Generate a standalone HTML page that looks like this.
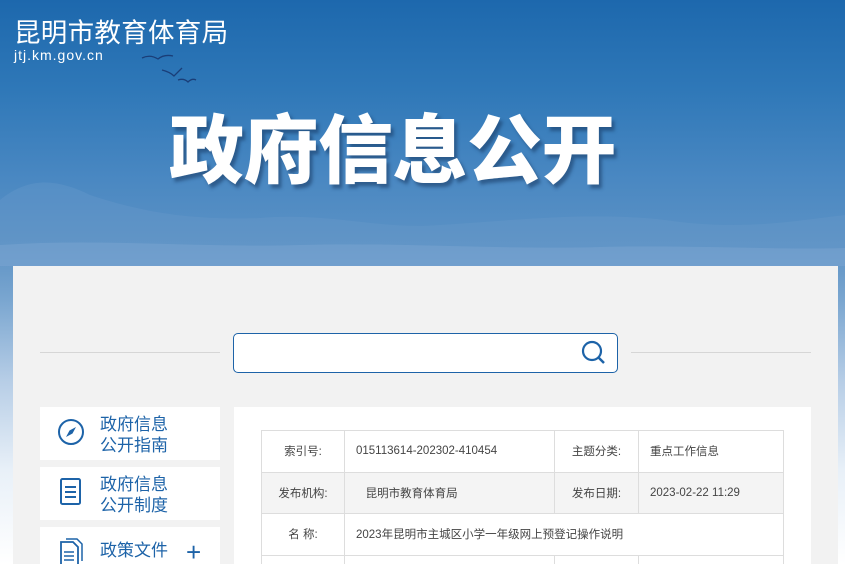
<!DOCTYPE html>
<html style="overflow:hidden;width:845px;height:564px"><head><meta charset="utf-8"><style>
*{margin:0;padding:0;box-sizing:border-box}
body{width:845px;height:564px;overflow:hidden;position:relative;font-family:"Liberation Sans","Noto Sans CJK SC",sans-serif;background:#fff}
.bg{position:absolute;left:0;top:0;width:845px;height:564px;background:linear-gradient(180deg,#1d68ad 0px,#2f78b8 90px,#4a88c2 180px,#5e93c5 250px,#7aa6d0 300px,#b6cde6 380px,#e8f0f8 470px,#fff 564px)}
.mnt{position:absolute;left:0;top:150px;width:845px;height:116px}
.site{position:absolute;left:14px;top:13px;color:#fff;font-size:26.5px;letter-spacing:0.3px;font-family:"Noto Sans CJK SC",sans-serif;line-height:36px}
.dom{position:absolute;left:14px;top:47px;color:#fff;font-size:14px;letter-spacing:1px}
.title{position:absolute;left:169px;top:90px;color:#fff;font-size:75px;font-weight:900;font-family:"Noto Sans CJK SC",sans-serif;letter-spacing:-0.5px;text-shadow:3px 4px 3px rgba(20,50,90,.5);line-height:110px}
.card{position:absolute;left:13px;top:266px;width:825px;height:298px;background:#f2f2f2}
.line{position:absolute;top:352px;height:1px;background:#d6d6d6}
.search{position:absolute;left:233px;top:333px;width:385px;height:40px;border:1px solid #1d63a8;border-radius:5px;background:#fff}
.nav{position:absolute;left:40px;width:180px;background:#fff;overflow:hidden}
.nav .t{position:absolute;left:60px;color:#1d63a8;font-size:17px;line-height:21px;font-family:"Noto Sans CJK SC",sans-serif}
.main{position:absolute;left:234px;top:407px;width:577px;height:157px;background:#fff}
.tw{position:absolute;left:261px;top:430px;width:523px;height:134px;overflow:hidden}
table{border-collapse:collapse;font-size:11.5px;color:#444;font-family:"Liberation Sans","Noto Sans CJK SC",sans-serif}
td{border:1px solid #ddd;height:41.5px;padding:0}
tr.g td{background:#f4f4f4}
.c1{width:83px;text-align:center}
.c2{width:210px;padding-left:11px}
.c3{width:84px;text-align:center}
.c4{width:145px;padding-left:11px}
</style></head><body>
<div class="bg"></div>
<svg class="mnt" viewBox="0 0 845 116" preserveAspectRatio="none">
<path d="M0 50 C30 25 60 30 90 45 C150 65 200 70 260 68 C330 62 380 80 440 75 C520 70 600 60 680 72 C750 80 800 70 845 65 L845 116 L0 116Z" fill="#6b9acb" opacity=".35"/>
<path d="M0 95 C100 88 200 98 300 95 C400 92 500 100 600 97 C700 95 780 100 845 98 L845 116 L0 116Z" fill="#7ca6d2" opacity=".5"/>
</svg>
<svg style="position:absolute;left:140px;top:50px" width="60" height="40"><g fill="none" stroke="#1a3e78" stroke-width="1.3"><path d="M2 8 Q10 4 18 9 Q24 4 33 6"/><path d="M22 20 Q30 22 34 26 Q38 22 42 18"/><path d="M38 30 Q44 28 48 32 Q52 28 56 30"/></g></svg>
<div class="site">昆明市教育体育局</div>
<div class="dom">jtj.km.gov.cn</div>
<div class="title">政府信息公开</div>
<div class="card"></div>
<div class="line" style="left:40px;width:180px"></div>
<div class="line" style="left:631px;width:180px"></div>
<div class="search"><svg style="position:absolute;right:10px;top:6px" width="26" height="26"><circle cx="11" cy="11" r="9" fill="none" stroke="#1d63a8" stroke-width="2.2"/><path d="M17.5 17.5L23 23" stroke="#1d63a8" stroke-width="2.5"/></svg></div>
<div class="nav" style="top:407px;height:53px"><svg style="position:absolute;left:16px;top:10px" width="30" height="30"><circle cx="15" cy="15" r="12" fill="none" stroke="#1d63a8" stroke-width="2"/><path d="M20 10 L16.5 16.5 L10 20 L13.5 13.5Z" fill="#1d63a8"/></svg><div class="t" style="top:5px">政府信息<br>公开指南</div></div>
<div class="nav" style="top:467px;height:53px"><svg style="position:absolute;left:18px;top:10px" width="26" height="30"><rect x="3" y="2" width="19" height="25" rx="1.5" fill="none" stroke="#1d63a8" stroke-width="2"/><path d="M7 10H18M7 15H18M7 20H18" stroke="#1d63a8" stroke-width="2"/></svg><div class="t" style="top:5px">政府信息<br>公开制度</div></div>
<div class="nav" style="top:527px;height:37px"><svg style="position:absolute;left:18px;top:10px" width="28" height="30"><path d="M3 5H15L20 10V28H3Z" fill="none" stroke="#1d63a8" stroke-width="1.8"/><path d="M8 2H19L24 7V24" fill="none" stroke="#1d63a8" stroke-width="1.5"/><path d="M6 15H16M6 19H16M6 23H16" stroke="#1d63a8" stroke-width="1.6"/></svg><div class="t" style="top:11px">政策文件</div><div style="position:absolute;left:146px;top:10px;color:#1d63a8;font-size:26px;line-height:30px">+</div></div>
<div class="main"></div>
<div class="tw"><table>
<tr><td class="c1">索引号:</td><td class="c2">015113614-202302-410454</td><td class="c3">主题分类:</td><td class="c4">重点工作信息</td></tr>
<tr class="g"><td class="c1">发布机构:</td><td class="c2">&nbsp;&nbsp;&nbsp;昆明市教育体育局</td><td class="c3">发布日期:</td><td class="c4">2023-02-22 11:29</td></tr>
<tr><td class="c1">名 称:</td><td colspan="3" style="padding-left:11px">2023年昆明市主城区小学一年级网上预登记操作说明</td></tr>
<tr><td class="c1"></td><td class="c2"></td><td class="c3"></td><td class="c4"></td></tr>
</table></div>
</body></html>
